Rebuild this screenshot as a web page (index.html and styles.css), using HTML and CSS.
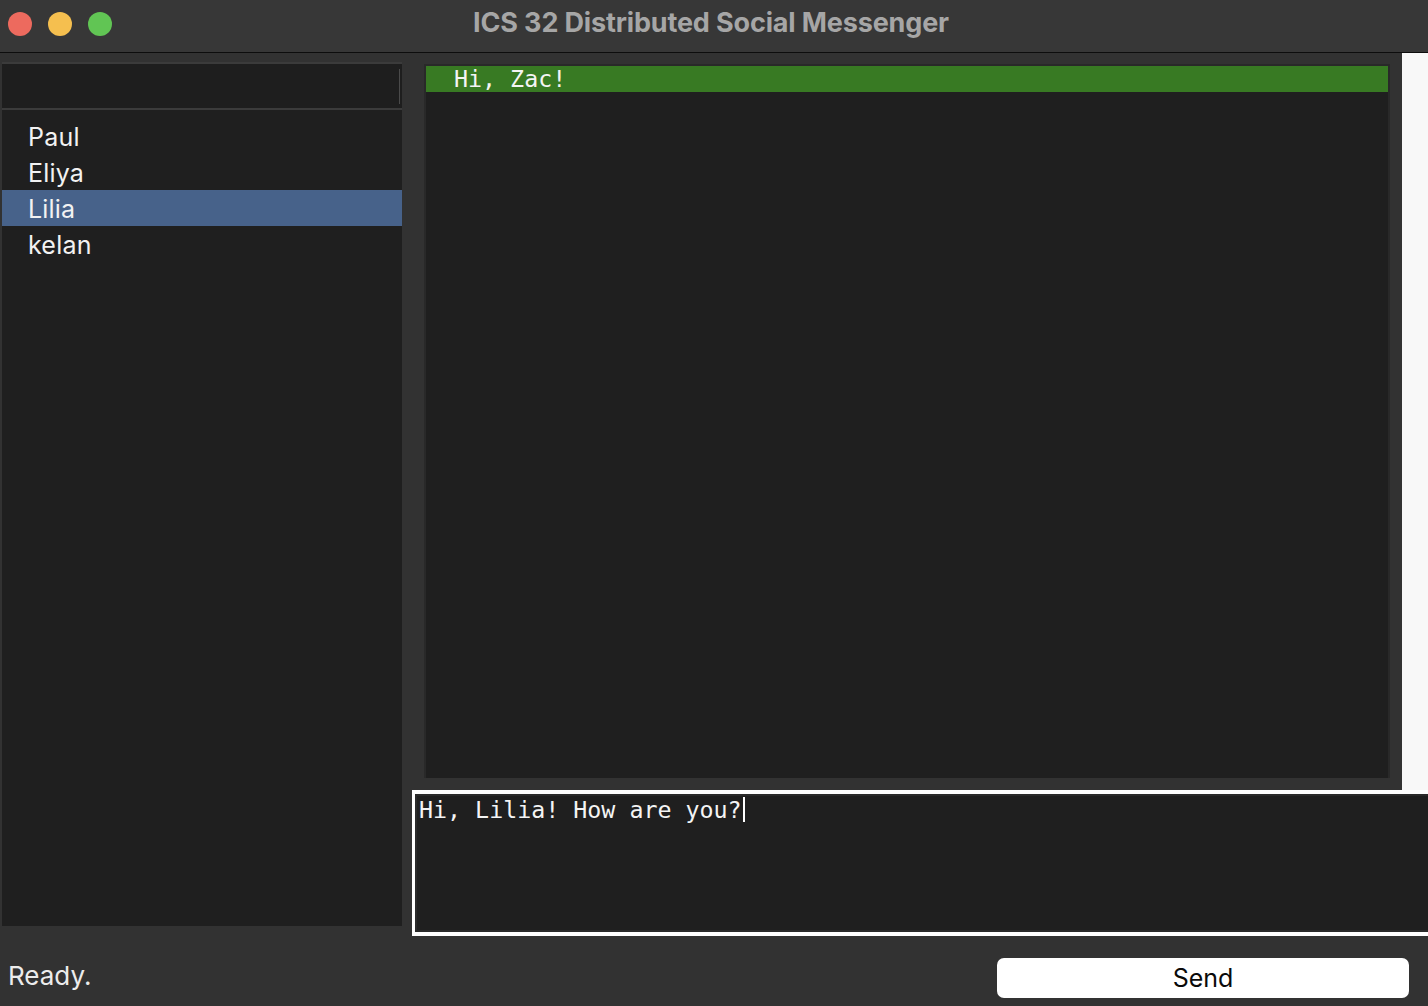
FILE: index.html
```html
<!DOCTYPE html>
<html lang="en">
<head>
<meta charset="utf-8">
<title>ICS 32 Distributed Social Messenger</title>
<link rel="stylesheet" href="styles.css">
</head>
<body>
<div class="window">
  <header class="titlebar">
    <div class="lights">
      <span class="light red"></span>
      <span class="light yellow"></span>
      <span class="light green"></span>
    </div>
    <div class="title">ICS 32 Distributed Social Messenger</div>
  </header>
  <main class="main">
    <section class="left">
      <div class="search"><span class="search-bar"></span></div>
      <ul class="contacts">
        <li class="contact">Paul</li>
        <li class="contact">Eliya</li>
        <li class="contact selected">Lilia</li>
        <li class="contact">kelan</li>
      </ul>
    </section>
    <section class="right">
      <div class="upper">
        <div class="chat">
          <div class="msg">Hi, Zac!</div>
        </div>
        <div class="strip"></div>
      </div>
      <div class="input">
        <div class="input-inner"><span class="typed">Hi, Lilia! How are you?</span><span class="caret"></span></div>
      </div>
    </section>
  </main>
  <footer class="footer">
    <div class="status">Ready.</div>
    <button class="send">Send</button>
  </footer>
</div>
</body>
</html>
```
FILE: styles.css
```css
* { box-sizing: border-box; }
html, body { margin: 0; padding: 0; background: #323232; }
.window {
  width: 1428px;
  height: 1006px;
  background: #323232;
  overflow: hidden;
  display: flex;
  flex-direction: column;
  font-family: Inter, "Liberation Sans", sans-serif;
}
.titlebar {
  height: 53px;
  flex: none;
  background: #373737;
  border-bottom: 1px solid #0d0d0d;
  display: flex;
  align-items: center;
  position: relative;
}
.lights {
  display: flex;
  gap: 16px;
  padding-left: 8px;
  margin-top: -5px;
}
.light {
  width: 24px;
  height: 24px;
  border-radius: 50%;
  display: block;
}
.red { background: #ed6a5e; }
.yellow { background: #f5bf4f; }
.green { background: #61c554; }
.title {
  position: absolute;
  left: 0;
  right: 0;
  top: 6px;
  text-align: center;
  color: #a6a6a6;
  font-size: 27px;
  font-weight: 700;
  letter-spacing: -0.15px;
  padding-right: 6px;
}
.main {
  display: flex;
  height: 883px;
  flex: none;
}
.left {
  width: 402px;
  flex: none;
  padding: 9px 0 0 2px;
  display: flex;
  flex-direction: column;
}
.search {
  height: 48px;
  background: #1e1e1e;
  border-top: 2px solid #3b3b3b;
  border-bottom: 2px solid #3b3b3b;
  display: flex;
  justify-content: flex-end;
  align-items: center;
  padding-right: 2px;
}
.search-bar {
  width: 1px;
  height: 35px;
  background: #4a4a4a;
}
.contacts {
  list-style: none;
  margin: 0;
  padding: 8px 0 0 0;
  height: 816px;
  background: #1f1f1f;
}
.contact {
  height: 36px;
  line-height: 38px;
  padding-left: 26px;
  color: #f2f2f2;
  font-size: 25px;
  letter-spacing: 0.2px;
}
.contact.selected { background: #47628a; }
.right {
  flex: 1;
  display: flex;
  flex-direction: column;
  min-width: 0;
}
.upper {
  display: flex;
  height: 737px;
}
.chat {
  margin: 11px 12px 0 22px;
  flex: 1;
  height: 714px;
  background: #1f1f1f;
  border: 2px solid #292929;
  border-bottom: none;
}
.msg {
  height: 26px;
  background: #387a23;
  color: #f4f4f4;
  font-family: "DejaVu Sans Mono", monospace;
  font-size: 23.3px;
  line-height: 25px;
  padding-left: 28px;
}
.strip {
  width: 26px;
  flex: none;
  background: #f8f8f8;
}
.input {
  margin-left: 10px;
  width: 1030px;
  height: 146px;
  border: 4px solid #ffffff;
  border-left-width: 3px;
  background: #1f1f1f;
}
.input-inner {
  height: 100%;
  border: 2px solid #2a2a2a;
  padding: 1px 0 0 2px;
  font-family: "DejaVu Sans Mono", monospace;
  font-size: 23.3px;
  line-height: 26px;
  color: #f4f4f4;
  white-space: pre;
}
.caret {
  display: inline-block;
  width: 2px;
  height: 25px;
  background: #ffffff;
  vertical-align: -4px;
  margin-left: 1px;
}
.footer {
  flex: 1;
  display: flex;
  align-items: flex-start;
  justify-content: space-between;
  padding: 0 19px 0 8px;
}
.status {
  color: #ececec;
  font-size: 26px;
  margin-top: 24px;
}
.send {
  width: 412px;
  height: 40px;
  border: none;
  border-radius: 7px;
  background: #ffffff;
  color: #0a0a0a;
  font-family: Inter, "Liberation Sans", sans-serif;
  font-size: 25px;
  padding: 0;
  margin-top: 22px;
}
```
